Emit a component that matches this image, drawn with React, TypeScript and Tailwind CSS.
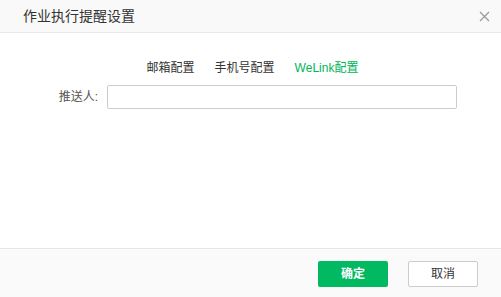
import React from "react";

export default function App() {
  const font = { fontFamily: '"Liberation Sans", "Noto Sans CJK SC", sans-serif' };
  return (
    <div className="w-[501px] h-[297px] bg-white flex flex-col text-[#333]" style={font}>
      <div className="h-[33px] shrink-0 bg-[#f9f9f9] border-b border-[#e9e9e9] flex items-center justify-between pl-[23px] pr-[6px]">
        <span className="text-[14px] leading-none text-[#333]">作业执行提醒设置</span>
        <button className="w-[20px] h-[20px] flex items-center justify-center mr-[1px]">
          <svg width="11" height="11" viewBox="0 0 11 11" fill="none" stroke="#999" strokeWidth="1.2">
            <path d="M1 1L10 10M10 1L1 10" />
          </svg>
        </button>
      </div>
      <div className="flex-1 bg-white flex flex-col">
        <div className="flex justify-center gap-[20px] pt-[28px] pl-[4px] text-[12px] leading-[14px]">
          <span className="text-[#333]">邮箱配置</span>
          <span className="text-[#333]">手机号配置</span>
          <span className="text-[#00b45a]">WeLink配置</span>
        </div>
        <div className="flex items-center mt-[10px]">
          <label className="w-[98px] text-right text-[12px] text-[#555]">推送人:</label>
          <input className="ml-[9px] w-[350px] h-[24px] border border-[#cccccc] rounded-[2px] outline-none px-2 text-[12px]" />
        </div>
      </div>
      <div className="h-[49px] shrink-0 bg-[#fafafa] border-t border-[#e6e6e6] flex items-start justify-end pt-[12px] pr-[23px] gap-[20px]">
        <button className="w-[70px] h-[26px] rounded-[2px] bg-[#00b960] text-white text-[12px] font-bold">确定</button>
        <button className="w-[70px] h-[26px] rounded-[2px] bg-white border border-[#cccccc] text-[#333] text-[12px]">取消</button>
      </div>
    </div>
  );
}
